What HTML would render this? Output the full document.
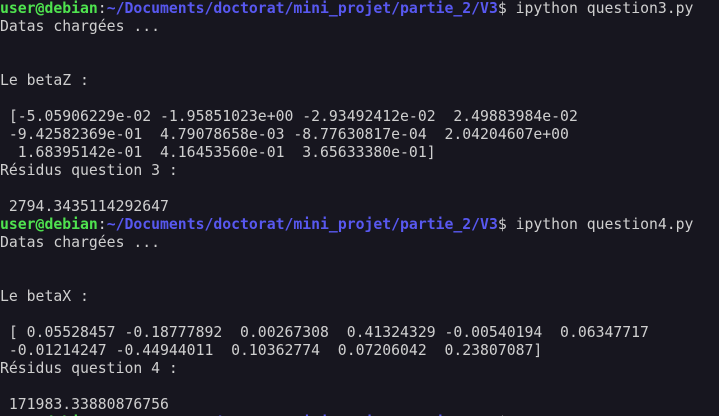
<!DOCTYPE html>
<html><head><style>
html,body{margin:0;padding:0;background:#17161f;width:719px;height:416px;overflow:hidden}
pre{margin:0;padding:0;font-family:"DejaVu Sans Mono","Liberation Mono",monospace;font-size:14.78px;line-height:18px;color:#cfcfcf;white-space:pre}
.g{color:#4fe34f;font-weight:bold}
.b{color:#5858f0;font-weight:bold}
.c{display:inline-block;width:8px;height:15px;border:1px solid #ddd;box-sizing:border-box;vertical-align:top;margin-top:14px}
</style></head><body><pre><span class="g">user@debian</span>:<span class="b">~/Documents/doctorat/mini_projet/partie_2/V3</span>$ ipython question3.py
Datas chargées ...


Le betaZ :

 [-5.05906229e-02 -1.95851023e+00 -2.93492412e-02  2.49883984e-02
 -9.42582369e-01  4.79078658e-03 -8.77630817e-04  2.04204607e+00
  1.68395142e-01  4.16453560e-01  3.65633380e-01]
Résidus question 3 :

 2794.3435114292647
<span class="g">user@debian</span>:<span class="b">~/Documents/doctorat/mini_projet/partie_2/V3</span>$ ipython question4.py
Datas chargées ...


Le betaX :

 [ 0.05528457 -0.18777892  0.00267308  0.41324329 -0.00540194  0.06347717
 -0.01214247 -0.44944011  0.10362774  0.07206042  0.23807087]
Résidus question 4 :

 171983.33880876756
<span class="g">user@debian</span>:<span class="b">~/Documents/doctorat/mini_projet/partie_2/V3</span>$ <span class="c"></span></pre></body></html>
